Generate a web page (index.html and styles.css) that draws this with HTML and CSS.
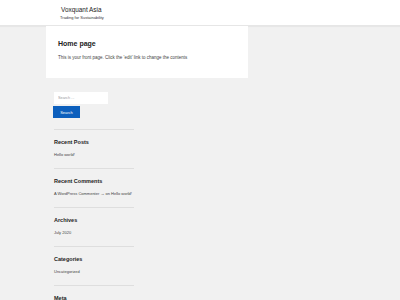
FILE: index.html
```html
<!DOCTYPE html>
<html lang="en">
<head>
    <meta charset="UTF-8">
    <title>Voxquant Asia</title>
    <link rel="stylesheet" href="styles.css">
</head>
<body>
    <!-- site header -->
    <header class="site-head">
        <div class="brand">
            <a class="site-title" href="#">Voxquant Asia</a>
            <p class="tagline">Trading for Sustainability</p>
        </div>
    </header>

    <!-- page content -->
    <main class="wrap">
        <article class="card">
            <h1>Home page</h1>
            <p>This is your front page. Click the 'edit' link to change the contents</p>
        </article>

        <aside class="sidebar">
            <form class="search">
                <input type="search" placeholder="Search ...">
                <button type="button">Search</button>
            </form>
            <section class="widget">
                <h2>Recent Posts</h2>
                <a href="#">Hello world!</a>
            </section>
            <section class="widget">
                <h2>Recent Comments</h2>
                <p>A WordPress Commenter &rarr; on <a href="#">Hello world!</a></p>
            </section>
            <section class="widget">
                <h2>Archives</h2>
                <a href="#">July 2020</a>
            </section>
            <section class="widget">
                <h2>Categories</h2>
                <a href="#">Uncategorized</a>
            </section>
            <section class="widget">
                <h2>Meta</h2>
            </section>
        </aside>
    </main>
</body>
</html>
```

FILE: styles.css
```css
html,body{
    margin: 0; padding: 0;
}
body{
    background-color: #f1f1f1;
    font-family: "Liberation Sans", Arial, sans-serif;
    color: #444;
    height: 300px; overflow: hidden;
}
a{
    color: #444; text-decoration: none;
}

/* header */
.site-head{
    background-color: #fff;
    height: 25px;
    border-bottom: 1px solid #e6e6e6;
    box-shadow: 0 1px 1px rgba(0,0,0,.04);
}
.brand{
    padding: 6px 0 0 60px;
}
.site-title{
    display: block;
    font-size: 6.4px; line-height: 7px;
    color: #222;
    padding-left: 1px;
}
.tagline{
    margin: 2px 0 0;
    font-size: 4px; line-height: 5px;
    color: #333;
}

/* content */
.wrap{
    padding-left: 46px;
}
.card{
    width: 190px; height: 52px;
    background-color: #fff;
    padding: 0 0 0 12px;
    overflow: hidden;
}
.card h1{
    margin: 0; padding-top: 14px;
    font-size: 7px; line-height: 8px;
    color: #222;
}
.card p{
    margin: 7px 0 0;
    font-size: 4.5px; line-height: 5px;
}

/* sidebar */
.sidebar{
    width: 80px;
    padding: 14px 0 0 8px;
}
.search{
    margin-bottom: 11px;
}
.search input{
    display: block;
    box-sizing: border-box;
    width: 54px; height: 12px;
    border: none; margin: 0; padding: 0 4px;
    background-color: #fff;
    font-family: inherit; font-size: 3.8px;
}
.search input::placeholder{
    color: #999;
}
.search button{
    display: block;
    margin: 2px 0 0 -1px;
    width: 27px; height: 12px;
    border: none; padding: 0;
    background-color: #0c5fbd;
    color: #fff;
    font-family: inherit; font-size: 4px;
}
.widget{
    box-sizing: border-box;
    border-top: 1px solid #dedede;
    height: 39px;
    padding-top: 9px;
}
.widget h2{
    margin: 0 0 6px;
    font-size: 5.5px; line-height: 7px;
    color: #222;
}
.widget p{
    margin: 0;
}
.widget a, .widget p{
    display: block; font-size: 4px; line-height: 5px;
}
.widget p a{
    display: inline;
}
```
